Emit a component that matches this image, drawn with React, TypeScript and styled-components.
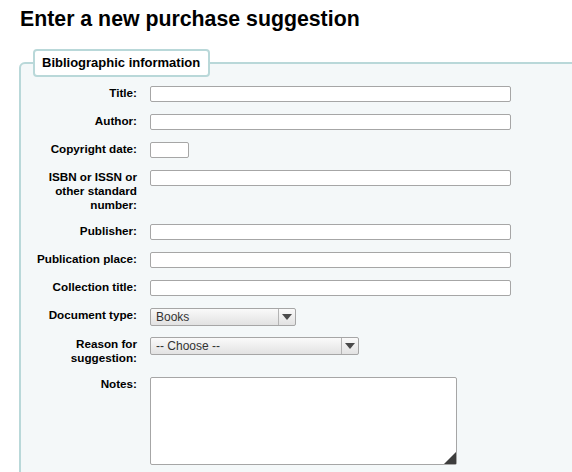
import React from 'react';
import styled, { createGlobalStyle } from 'styled-components';

const GlobalStyle = createGlobalStyle`
  html, body {
    margin: 0;
    padding: 0;
    background: #ffffff;
    overflow: hidden;
  }
  body {
    font-family: "Liberation Sans", Arial, sans-serif;
    color: #000;
  }
`;

const Page = styled.div`
  padding: 8px 0 0 19px;
`;

const Heading = styled.h1`
  margin: 0 0 18px 1px;
  font-size: 21.3px;
  line-height: 23px;
  font-weight: bold;
`;

const Fieldset = styled.fieldset`
  width: 560px;
  margin: 0;
  padding: 9px 12px 20px 12px;
  background: #f4f8f9;
  border: 2px solid #b9d8d9;
  border-radius: 6px;
  box-sizing: border-box;
`;

const Legend = styled.legend`
  padding: 4px 8px 5px 7px;
  background: #ffffff;
  border: 2px solid #b9d8d9;
  border-radius: 4px;
  font-size: 13px;
  font-weight: bold;
`;

const Rows = styled.ol`
  list-style: none;
  margin: 0;
  padding: 0;
`;

const Row = styled.li<{ $gap?: number }>`
  display: flex;
  align-items: flex-start;
  margin-bottom: ${(p) => p.$gap ?? 12}px;
`;

const Label = styled.label`
  width: 104px;
  flex-shrink: 0;
  margin-right: 13px;
  text-align: right;
  font-size: 11.7px;
  line-height: 14px;
  font-weight: bold;
`;

const TextInput = styled.input<{ $width?: number }>`
  width: ${(p) => p.$width ?? 361}px;
  height: 16px;
  box-sizing: border-box;
  margin: 0;
  padding: 0 3px;
  border: 1px solid #a6a6a6;
  border-radius: 2px;
  background: #ffffff;
  font-family: "Liberation Sans", Arial, sans-serif;
  font-size: 11px;
`;

const SelectBox = styled.div<{ $width: number }>`
  display: flex;
  width: ${(p) => p.$width}px;
  height: 18px;
  box-sizing: border-box;
  border: 1px solid #a6a6a6;
  border-radius: 2px;
  background: linear-gradient(#fafafa, #e2e2e2);
  overflow: hidden;
`;

const NativeSelect = styled.select`
  flex: 1;
  min-width: 0;
  height: 16px;
  appearance: none;
  border: none;
  background: transparent;
  margin: 0;
  padding: 0 0 0 5px;
  font-family: "Liberation Sans", Arial, sans-serif;
  font-size: 12px;
  line-height: 16px;
  color: #333;
  outline: none;
`;

const ArrowCell = styled.span`
  width: 16px;
  flex-shrink: 0;
  display: flex;
  align-items: center;
  justify-content: center;
  border-left: 1px solid #b4b4b4;
`;

const Arrow = styled.span`
  width: 0;
  height: 0;
  border-left: 5px solid transparent;
  border-right: 5px solid transparent;
  border-top: 6px solid #4a4a4a;
`;

const NotesWrap = styled.div`
  position: relative;
  width: 307px;
  height: 88px;
`;

const Notes = styled.textarea`
  width: 100%;
  height: 100%;
  box-sizing: border-box;
  margin: 0;
  border: 1px solid #a6a6a6;
  border-radius: 2px;
  background: #ffffff;
  resize: none;
  font-family: "Liberation Sans", Arial, sans-serif;
  font-size: 11px;
`;

const Grip = styled.span`
  position: absolute;
  right: 1px;
  bottom: 1px;
  width: 0;
  height: 0;
  border-left: 12px solid transparent;
  border-bottom: 12px solid #3d3d3d;
`;

const Select: React.FC<{ width: number; options: string[] }> = ({ width, options }) => (
  <SelectBox $width={width}>
    <NativeSelect>
      {options.map((o) => (
        <option key={o}>{o}</option>
      ))}
    </NativeSelect>
    <ArrowCell>
      <Arrow />
    </ArrowCell>
  </SelectBox>
);

const textFields: { label: string; width?: number }[] = [
  { label: 'Title:' },
  { label: 'Author:' },
  { label: 'Copyright date:', width: 39 },
  { label: 'ISBN or ISSN or other standard number:' },
  { label: 'Publisher:' },
  { label: 'Publication place:' },
  { label: 'Collection title:' },
];

export default function App() {
  return (
    <Page>
      <GlobalStyle />
      <Heading>Enter a new purchase suggestion</Heading>
      <Fieldset>
        <Legend>Bibliographic information</Legend>
        <Rows>
          {textFields.map((f) => (
            <Row key={f.label}>
              <Label>{f.label}</Label>
              <TextInput type="text" $width={f.width} />
            </Row>
          ))}
          <Row $gap={11}>
            <Label>Document type:</Label>
            <Select width={146} options={['Books', 'Serials', 'Ebooks']} />
          </Row>
          <Row>
            <Label>Reason for suggestion:</Label>
            <Select width={209} options={['-- Choose --']} />
          </Row>
          <Row>
            <Label>Notes:</Label>
            <NotesWrap>
              <Notes />
              <Grip />
            </NotesWrap>
          </Row>
        </Rows>
      </Fieldset>
    </Page>
  );
}
